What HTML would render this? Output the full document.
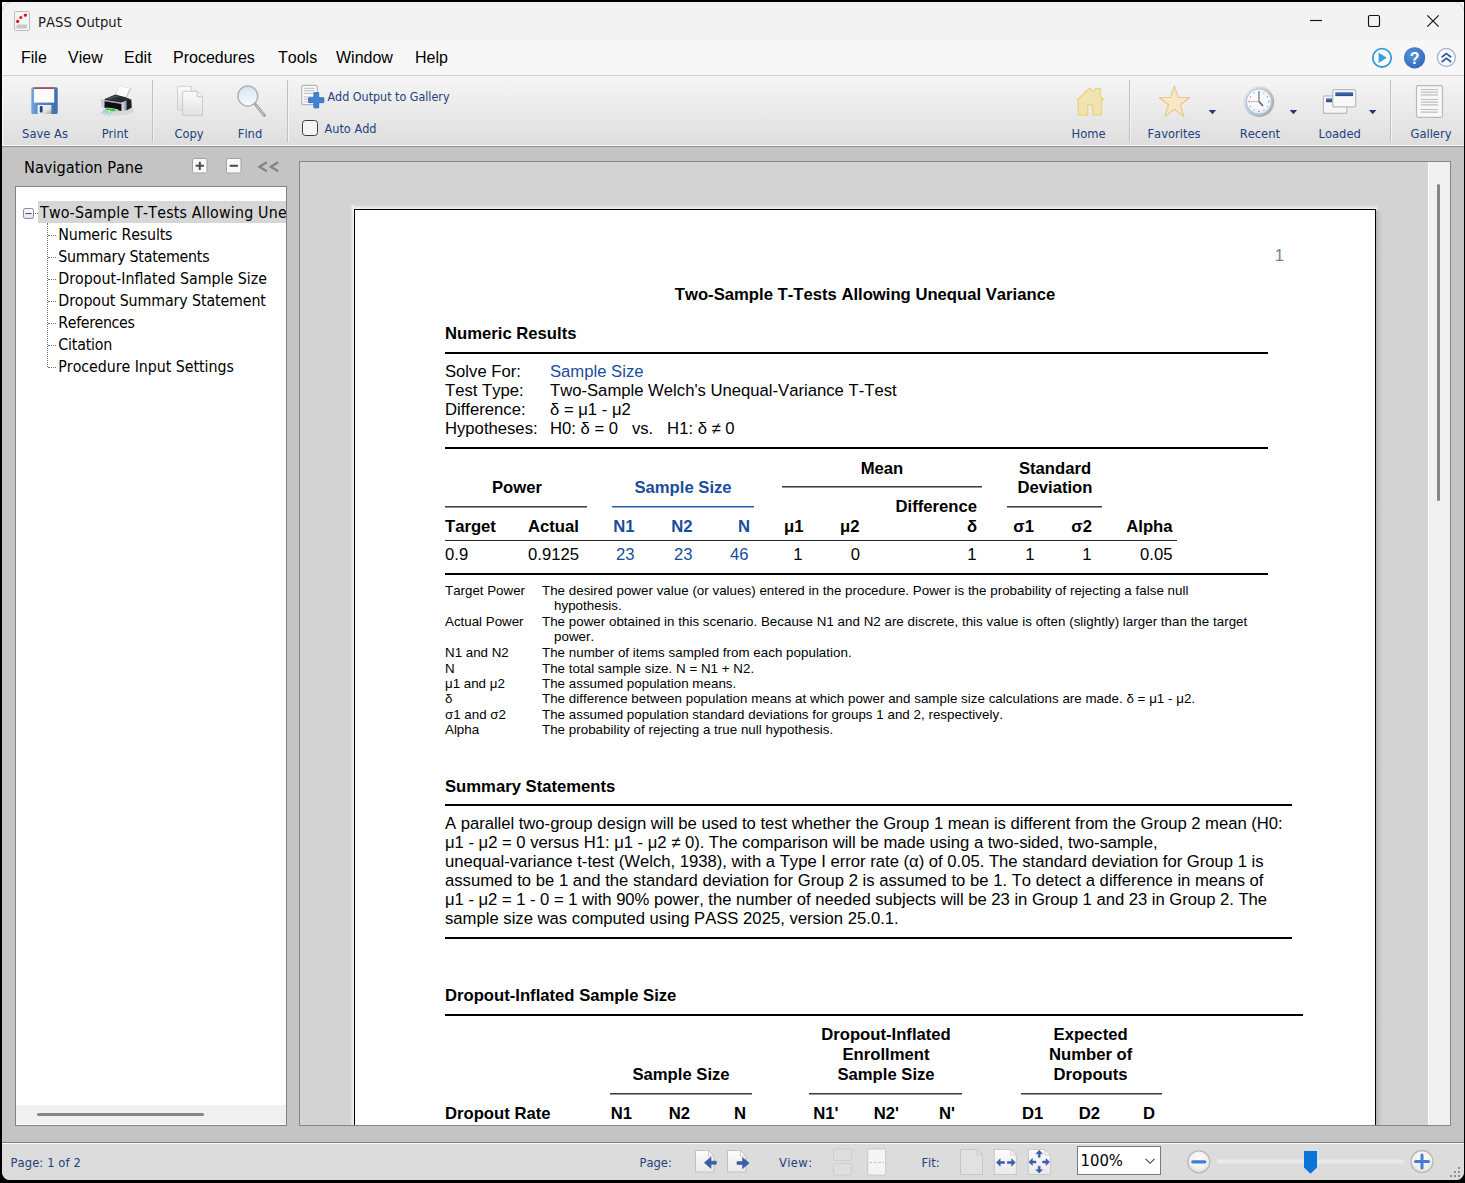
<!DOCTYPE html>
<html lang="en"><head><meta charset="utf-8"><title>PASS Output</title>
<style>
html,body{margin:0;padding:0;}
body{width:1465px;height:1183px;overflow:hidden;background:#000;position:relative;font-family:"Liberation Sans",Arial,sans-serif;color:#000;}
.a{position:absolute;}
.t{position:absolute;white-space:pre;font-kerning:none;}
#win{position:absolute;left:2px;top:2px;width:1462px;height:1178px;background:#c4c4c4;border-radius:0 0 8px 8px;overflow:hidden;}
svg{position:absolute;overflow:visible;}

</style></head>
<body>
<div id="win"></div>
<div class="a" style="left:2px;top:2px;width:1462px;height:38px;background:#f3f3f3;"></div>
<svg class="a" style="left:2px;top:2px" width="1462" height="12" viewBox="2 2 1462 12"><path d="M2 10V2H10A8 8 0 0 0 2 10Z" fill="#fdfdfd"/><path d="M2.500 10.500A8 8 0 0 1 10.500 2.500" fill="none" stroke="#d4d4d4" stroke-width="1"/><path d="M1464 10V2H1456A8 8 0 0 1 1464 10Z" fill="#fdfdfd"/><path d="M1463.500 10.500A8 8 0 0 0 1455.500 2.500" fill="none" stroke="#d4d4d4" stroke-width="1"/></svg>
<svg class="a" style="left:14px;top:11px" width="17" height="21" viewBox="0 0 17 21">
<rect x="0.5" y="0.5" width="15" height="19" rx="1" fill="#f4f4f4" stroke="#bdbdbd"/>
<rect x="2.5" y="13.5" width="10.5" height="4" fill="#c8c8c8"/>
<circle cx="3.7" cy="10.4" r="1.6" fill="#e8111a"/><circle cx="6.8" cy="6.6" r="1.5" fill="#e8111a"/><circle cx="11.4" cy="4.2" r="1.6" fill="#e8111a"/>
</svg>
<div class="t " style="top:12.00px;font-size:14.7px;line-height:19px;left:38px;color:#1b1b1b;font-family:'DejaVu Sans Condensed', 'DejaVu Sans', 'Liberation Sans', sans-serif;font-kerning:none;">PASS Output</div>
<svg class="a" style="left:1300px;top:2px" width="163" height="38" viewBox="1300 2 163 38" fill="none" stroke="#111" stroke-width="1.15">
<path d="M1310 20.5h12"/>
<rect x="1368.5" y="15.5" width="11" height="11" rx="1.6"/>
<path d="M1427.3 15.3l11.4 11.4M1438.7 15.3l-11.4 11.4"/>
</svg>
<div class="a" style="left:2px;top:40px;width:1462px;height:35px;background:#f7f7f7;"></div>
<div class="a" style="left:2px;top:75px;width:1462px;height:1px;background:#d2d2d2;"></div>
<div class="t " style="top:47.00px;font-size:16px;line-height:21px;left:21px;">File</div>
<div class="t " style="top:47.00px;font-size:16px;line-height:21px;left:68px;">View</div>
<div class="t " style="top:47.00px;font-size:16px;line-height:21px;left:124px;">Edit</div>
<div class="t " style="top:47.00px;font-size:16px;line-height:21px;left:173px;">Procedures</div>
<div class="t " style="top:47.00px;font-size:16px;line-height:21px;left:278px;">Tools</div>
<div class="t " style="top:47.00px;font-size:16px;line-height:21px;left:336px;">Window</div>
<div class="t " style="top:47.00px;font-size:16px;line-height:21px;left:415px;">Help</div>
<svg class="a" style="left:1365px;top:42px" width="98" height="32" viewBox="1365 42 98 32">
<circle cx="1382" cy="57.8" r="9.2" fill="#fdfdfd" stroke="#3a9ad8" stroke-width="1.8"/>
<path d="M1378.6 52.6l8.2 5.2l-8.2 5.2z" fill="#3aa0e2"/>
<defs><radialGradient id="hg" cx="0.4" cy="0.35" r="0.7"><stop offset="0" stop-color="#5b93dc"/><stop offset="1" stop-color="#2f68b8"/></radialGradient></defs>
<circle cx="1414.6" cy="57.8" r="10.6" fill="url(#hg)"/>
<text x="1414.7" y="63.6" font-family="Liberation Sans, sans-serif" font-size="16" font-weight="bold" fill="#fff" text-anchor="middle">?</text>
<circle cx="1446.4" cy="57.5" r="9" fill="#fdfdfd" stroke="#a3b7d6" stroke-width="1.400"/>
<path d="M1441.6 57.2l4.8-3.6l4.8 3.6M1441.6 62l4.8-3.6l4.8 3.6" fill="none" stroke="#2f5b9c" stroke-width="1.7"/>
</svg>
<div class="a" style="left:2px;top:76px;width:1462px;height:69px;background:linear-gradient(#f5f5f5,#eaeaea 50%,#dedede);"></div>
<div class="a" style="left:2px;top:145px;width:1462px;height:1px;background:#fafafa;"></div>
<div class="a" style="left:2px;top:76px;width:1px;height:69px;background:#fbfbfb;"></div>
<div class="a" style="left:2px;top:146px;width:1462px;height:1px;background:#8e8e8e;"></div>
<div class="a" style="left:152px;top:80px;width:1px;height:62px;background:#c0c0c0;"></div>
<div class="a" style="left:153px;top:80px;width:1px;height:62px;background:#f4f4f4;"></div>
<div class="a" style="left:287px;top:80px;width:1px;height:62px;background:#c0c0c0;"></div>
<div class="a" style="left:288px;top:80px;width:1px;height:62px;background:#f4f4f4;"></div>
<div class="a" style="left:1129px;top:80px;width:1px;height:62px;background:#c0c0c0;"></div>
<div class="a" style="left:1130px;top:80px;width:1px;height:62px;background:#f4f4f4;"></div>
<div class="a" style="left:1390px;top:80px;width:1px;height:62px;background:#c0c0c0;"></div>
<div class="a" style="left:1391px;top:80px;width:1px;height:62px;background:#f4f4f4;"></div>
<svg class="a" style="left:0;top:75px" width="1465" height="72" viewBox="0 75 1465 72">
<defs>
<linearGradient id="fl" x1="0" x2="1"><stop offset="0" stop-color="#7aa5d8"/><stop offset="0.25" stop-color="#5a8bc8"/><stop offset="1" stop-color="#3f6fb0"/></linearGradient>
<linearGradient id="sh" x1="0" x2="1" y1="0" y2="1"><stop offset="0" stop-color="#fafafa"/><stop offset="0.6" stop-color="#e6e6e6"/><stop offset="1" stop-color="#a8a8a8"/></linearGradient>
<linearGradient id="pg" x1="0" x2="0" y1="0" y2="1"><stop offset="0" stop-color="#fbfbfb"/><stop offset="1" stop-color="#e2e2e2"/></linearGradient>
<linearGradient id="gl" x1="0" x2="0" y1="0" y2="1"><stop offset="0" stop-color="#d3e6f3"/><stop offset="0.45" stop-color="#e6f0f7"/><stop offset="1" stop-color="#fafcfd"/></linearGradient>
<linearGradient id="hm" x1="0" x2="0" y1="0" y2="1"><stop offset="0" stop-color="#f2e5b6"/><stop offset="1" stop-color="#f1e2ae"/></linearGradient>
<linearGradient id="prs" x1="0" x2="1"><stop offset="0" stop-color="#e4e6ee"/><stop offset="0.5" stop-color="#b9bcc8"/><stop offset="1" stop-color="#8a8d99"/></linearGradient>
<linearGradient id="ph" x1="0" x2="1" y1="0" y2="1"><stop offset="0" stop-color="#4fd04a"/><stop offset="0.5" stop-color="#3fb848"/><stop offset="1" stop-color="#d8e070"/></linearGradient>
<radialGradient id="ck" cx="0.45" cy="0.4" r="0.6"><stop offset="0" stop-color="#ffffff"/><stop offset="0.8" stop-color="#f2f4f8"/><stop offset="1" stop-color="#dfe6f0"/></radialGradient>
<linearGradient id="ckr" x1="0" x2="1" y1="0" y2="1"><stop offset="0" stop-color="#f2f2f2"/><stop offset="0.5" stop-color="#c9c9c9"/><stop offset="1" stop-color="#9c9c9c"/></linearGradient>
<linearGradient id="wb" x1="0" x2="0" y1="0" y2="1"><stop offset="0" stop-color="#4d79b8"/><stop offset="1" stop-color="#1f4788"/></linearGradient>
</defs>
<!-- save -->
<rect x="31.3" y="87.3" width="26.4" height="26.6" rx="1.5" fill="url(#fl)"/>
<rect x="34" y="88" width="20.2" height="14.6" fill="#fbfbfb"/>
<rect x="34" y="87.4" width="20.2" height="1.6" fill="#a24f60"/>
<rect x="37.6" y="105" width="13.8" height="9" fill="url(#sh)"/>
<rect x="39.8" y="106" width="2.8" height="6.6" rx="0.8" fill="#1c4586"/>
<!-- print -->
<ellipse cx="118" cy="110.500" rx="16" ry="5" fill="#000" opacity="0.07"/>
<polygon points="118.500,86.200 131.300,88.100 126.800,97.600 115.900,95.200" fill="#fcfcfc" stroke="#dcdce0" stroke-width="0.700"/>
<polygon points="129.800,88.300 131.300,88.100 126.800,97.600 125.600,97.200" fill="#c9c9d0"/>
<polygon points="104.700,98.900 115.300,94.600 125.500,97.300 130.900,99.300 121.700,103 104.500,100.300" fill="#2a2b36"/>
<polygon points="106.500,98.700 115.200,95.400 119,96.400 109.500,99.600" fill="#5b5e70" opacity="0.650"/>
<polygon points="100.900,99.500 121.700,102.500 121.700,104 100.900,100.900" fill="#a3a6b3"/>
<polygon points="104.300,101.300 121.700,103.900 121.700,111 104.300,107.800" fill="#0e0e13"/>
<polygon points="100.800,99.400 104.300,100 104.300,107.800 101.400,107.100" fill="#c9ccd8"/>
<polygon points="121.700,102.600 126.500,100.500 126.500,110.300 121.700,111.600" fill="url(#prs)"/>
<polygon points="126.500,100.500 131.300,99.200 131.800,107.600 126.500,110.600" fill="#1d1e26"/>
<polygon points="106.600,107.400 118.200,109.300 111.100,115.400 99.500,112.800" fill="#f2f2f2"/>
<polygon points="107,108 117,109.700 114.800,111.600 104.600,109.700" fill="#2fc83a"/>
<polygon points="104.600,109.700 114.800,111.600 111,114.700 100.600,112.600" fill="#9fd0f4"/>
<circle cx="109.400" cy="111.900" r="1.300" fill="#e4e66a"/>
<polygon points="99.500,112.800 111.100,115.400 111,116.200 99.400,113.600" fill="#c8c8c8"/>
<!-- copy -->
<path d="M177.5 86.3h13.6l4.8 4.8v18.9h-18.4z" fill="url(#pg)" stroke="#cdcdcd" stroke-width="0.9"/>
<path d="M191.1 86.3v4.8h4.8" fill="#f2f2f2" stroke="#c4c4c4" stroke-width="0.8"/>
<path d="M182.6 91.4h14.6l5.3 5.3v18.9h-19.9z" fill="url(#pg)" stroke="#c6c6c6" stroke-width="0.9"/>
<path d="M197.2 91.4v5.3h5.3" fill="#f4f4f4" stroke="#bdbdbd" stroke-width="0.8"/>
<!-- find -->
<path d="M255.4 104.4l9 11" stroke="#9d9d9d" stroke-width="3" stroke-linecap="round"/>
<path d="M256 105l8 9.8" stroke="#d8d8d8" stroke-width="1" stroke-linecap="round"/>
<circle cx="247.8" cy="96" r="9.9" fill="url(#gl)" stroke="#b2b2b2" stroke-width="1.5"/>
<!-- add output -->
<rect x="301.700" y="85.400" width="15.600" height="19.200" rx="2" fill="#fbfbfb" stroke="#b6b6b6" stroke-width="1.200"/>
<path d="M303.800 88.400h10.900M303.800 90.600h10.900M303.800 93.400h10.900M303.800 96.900h10.900M303.800 99.400h10.900M303.800 102h10.900" stroke="#c6c6c6" stroke-width="1.100"/>
<path d="M313.900 92.700h4.800v5.100h5.100v4.800h-5.100v5.200h-4.800v-5.200h-5.200v-4.800h5.200z" fill="#3f83d8" stroke="#2f69b6" stroke-width="0.9" stroke-linejoin="round"/>
<!-- home -->
<path d="M1077.300 99.700L1089.600 87.900L1093.400 91.500L1095.300 90.200V88.600H1100.300V96.500L1103.300 99.300L1102.100 100.500H1101.400V114.900H1092.700V106.500Q1092.700 104.800 1091 104.800H1089.300Q1087.600 104.800 1087.600 106.500V114.900H1078.300V100.700Z" fill="url(#hm)" stroke="#ebd57e" stroke-width="1.400" stroke-linejoin="round"/>
<!-- star -->
<path d="M1174.40 85.80L1178.09 97.36L1189.67 97.48L1180.36 104.74L1183.84 116.37L1174.40 109.30L1164.96 116.37L1168.44 104.74L1159.13 97.48L1170.71 97.36Z" fill="#fbe6c4" stroke="#e6c790" stroke-width="1.100" stroke-linejoin="round"/>
<path d="M1208.700 110h7.400l-3.700 4.200z" fill="#1f3c70"/>
<!-- clock -->
<circle cx="1259" cy="101.600" r="15.300" fill="url(#ckr)"/>
<circle cx="1259" cy="101.600" r="12.600" fill="url(#ck)" stroke="#a9c4e6" stroke-width="1.200"/>
<g fill="#8a8f99"><circle cx="1259" cy="91.800" r="0.8"/><circle cx="1259" cy="111.400" r="0.8"/><circle cx="1249.200" cy="101.600" r="0.8"/><circle cx="1268.800" cy="101.600" r="0.8"/><circle cx="1263.900" cy="93.100" r="0.600"/><circle cx="1267.500" cy="96.700" r="0.600"/><circle cx="1267.500" cy="106.500" r="0.600"/><circle cx="1263.900" cy="110.100" r="0.600"/><circle cx="1254.100" cy="110.100" r="0.600"/><circle cx="1250.500" cy="106.500" r="0.600"/><circle cx="1250.500" cy="96.700" r="0.600"/><circle cx="1254.100" cy="93.100" r="0.600"/></g>
<path d="M1259 101.600v-9.800" stroke="#6a7380" stroke-width="1.200"/>
<path d="M1259 101.600l4 4.400" stroke="#4c5562" stroke-width="1.500"/>
<path d="M1259 101.600h-8.500" stroke="#eea592" stroke-width="1"/>
<path d="M1289.700 110h7.400l-3.700 4.200z" fill="#1f3c70"/>
<!-- loaded -->
<rect x="1323.400" y="95.800" width="23.400" height="17.600" rx="2" fill="#f5f5f5" stroke="#bcbcbc" stroke-width="1.200"/>
<rect x="1326" y="98.400" width="18" height="3.800" fill="url(#wb)"/>
<rect x="1332.700" y="89.700" width="23" height="17.200" rx="2" fill="#f8f8f8" stroke="#bcbcbc" stroke-width="1.200"/>
<rect x="1335.300" y="92.200" width="17.800" height="3.900" fill="url(#wb)"/>
<path d="M1369 110h7.400l-3.700 4.200z" fill="#1f3c70"/>
<!-- gallery -->
<rect x="1416.500" y="85.700" width="26" height="31.600" rx="1.500" fill="#f8f8f8" stroke="#b9b9b9" stroke-width="1.200"/>
<path d="M1420.700 89.500h17.300M1420.700 92.200h17.300M1420.700 94.900h17.300M1420.700 99.500h17.300M1420.700 102.200h17.300M1420.700 104.900h17.300M1420.700 109.500h17.300M1420.700 112.200h17.300" stroke="#bdbdbd" stroke-width="1.200"/>
</svg>
<div class="t " style="top:125.00px;font-size:12.8px;line-height:17px;left:-255px;width:600px;text-align:center;color:#22417e;font-family:'DejaVu Sans Condensed', 'DejaVu Sans', 'Liberation Sans', sans-serif;font-kerning:none;">Save As</div>
<div class="t " style="top:125.00px;font-size:12.8px;line-height:17px;left:-185px;width:600px;text-align:center;color:#22417e;font-family:'DejaVu Sans Condensed', 'DejaVu Sans', 'Liberation Sans', sans-serif;font-kerning:none;">Print</div>
<div class="t " style="top:125.00px;font-size:12.8px;line-height:17px;left:-111px;width:600px;text-align:center;color:#22417e;font-family:'DejaVu Sans Condensed', 'DejaVu Sans', 'Liberation Sans', sans-serif;font-kerning:none;">Copy</div>
<div class="t " style="top:125.00px;font-size:12.8px;line-height:17px;left:-50px;width:600px;text-align:center;color:#22417e;font-family:'DejaVu Sans Condensed', 'DejaVu Sans', 'Liberation Sans', sans-serif;font-kerning:none;">Find</div>
<div class="t " style="top:89.00px;font-size:12.4px;line-height:16px;left:327.5px;color:#22417e;font-family:'DejaVu Sans Condensed', 'DejaVu Sans', 'Liberation Sans', sans-serif;font-kerning:none;">Add Output to Gallery</div>
<div class="t " style="top:121.00px;font-size:12.6px;line-height:16px;left:324.5px;color:#22417e;font-family:'DejaVu Sans Condensed', 'DejaVu Sans', 'Liberation Sans', sans-serif;font-kerning:none;">Auto Add</div>
<div class="a" style="left:302px;top:120px;width:14px;height:14px;background:#f5f5f5;border:1px solid #3c3c3c;border-radius:3.5px;"></div>
<div class="t " style="top:125.00px;font-size:12.8px;line-height:17px;left:788.5px;width:600px;text-align:center;color:#22417e;font-family:'DejaVu Sans Condensed', 'DejaVu Sans', 'Liberation Sans', sans-serif;font-kerning:none;">Home</div>
<div class="t " style="top:125.00px;font-size:12.8px;line-height:17px;left:874px;width:600px;text-align:center;color:#22417e;font-family:'DejaVu Sans Condensed', 'DejaVu Sans', 'Liberation Sans', sans-serif;font-kerning:none;">Favorites</div>
<div class="t " style="top:125.00px;font-size:12.8px;line-height:17px;left:959.8px;width:600px;text-align:center;color:#22417e;font-family:'DejaVu Sans Condensed', 'DejaVu Sans', 'Liberation Sans', sans-serif;font-kerning:none;">Recent</div>
<div class="t " style="top:125.00px;font-size:12.8px;line-height:17px;left:1039.7px;width:600px;text-align:center;color:#22417e;font-family:'DejaVu Sans Condensed', 'DejaVu Sans', 'Liberation Sans', sans-serif;font-kerning:none;">Loaded</div>
<div class="t " style="top:125.00px;font-size:12.8px;line-height:17px;left:1131px;width:600px;text-align:center;color:#22417e;font-family:'DejaVu Sans Condensed', 'DejaVu Sans', 'Liberation Sans', sans-serif;font-kerning:none;">Gallery</div>
<div class="t " style="top:157.00px;font-size:16.2px;line-height:21px;left:24px;font-family:'DejaVu Sans Condensed', 'DejaVu Sans', 'Liberation Sans', sans-serif;font-kerning:none;">Navigation Pane</div>
<svg class="a" style="left:190px;top:155px" width="100" height="24" viewBox="190 155 100 24">
<rect x="192.500" y="158.500" width="14.500" height="14.500" rx="1.500" fill="#f8f8f8" stroke="#a2a2a2"/>
<path d="M195.700 165.800h8.200M199.800 161.700v8.200" stroke="#4a4a4a" stroke-width="2" fill="none"/>
<rect x="226.500" y="158.500" width="14.500" height="14.500" rx="1.500" fill="#f8f8f8" stroke="#a2a2a2"/>
<path d="M229.700 165.800h8.200" stroke="#4a4a4a" stroke-width="2" fill="none"/>
<path d="M266.800 162.200l-7.400 4.500l7.400 4.500M278.300 162.200l-7.400 4.500l7.400 4.500" stroke="#858585" stroke-width="2.300" fill="none"/>
</svg>
<div class="a" style="left:15px;top:186px;width:270px;height:938px;background:#fff;border:1px solid #828282;"></div>
<div class="a" style="left:38px;top:201px;width:248px;height:22px;background:#d6d6d6;"></div>
<div class="a" style="left:47px;top:223px;width:0;height:144px;border-left:1px dotted #707070;"></div>
<div class="a" style="left:35px;top:213px;width:3px;height:0;border-top:1px dotted #707070;"></div>
<svg class="a" style="left:23px;top:208px" width="13" height="13" viewBox="0 0 13 13"><defs><linearGradient id="eb" x1="0" x2="0" y1="0" y2="1"><stop offset="0" stop-color="#ffffff"/><stop offset="1" stop-color="#e4e4e4"/></linearGradient></defs><rect x="0.5" y="0.5" width="10" height="10" rx="1.800" fill="url(#eb)" stroke="#8c8c8c"/><path d="M2.400 5.500h6.200" stroke="#3d52b4" stroke-width="1.100"/></svg>
<div class="a" style="left:40px;top:201px;width:246px;height:22px;overflow:hidden;"><div class="t" style="left:0;top:1px;font-size:15.8px;line-height:22px;font-kerning:none;letter-spacing:0.2px;font-family:'DejaVu Sans Condensed', 'DejaVu Sans', 'Liberation Sans', sans-serif">Two-Sample T-Tests Allowing Unequal Variance</div></div>
<div class="a" style="left:48px;top:235px;width:8px;height:0;border-top:1px dotted #707070;"></div>
<div class="t " style="top:224.00px;font-size:15.8px;line-height:21px;left:58.3px;font-family:'DejaVu Sans Condensed', 'DejaVu Sans', 'Liberation Sans', sans-serif;font-kerning:none;letter-spacing:-0.15px;">Numeric Results</div>
<div class="a" style="left:48px;top:257px;width:8px;height:0;border-top:1px dotted #707070;"></div>
<div class="t " style="top:246.00px;font-size:15.8px;line-height:21px;left:58.3px;font-family:'DejaVu Sans Condensed', 'DejaVu Sans', 'Liberation Sans', sans-serif;font-kerning:none;letter-spacing:-0.24px;">Summary Statements</div>
<div class="a" style="left:48px;top:279px;width:8px;height:0;border-top:1px dotted #707070;"></div>
<div class="t " style="top:268.00px;font-size:15.8px;line-height:21px;left:58.3px;font-family:'DejaVu Sans Condensed', 'DejaVu Sans', 'Liberation Sans', sans-serif;font-kerning:none;">Dropout-Inflated Sample Size</div>
<div class="a" style="left:48px;top:301px;width:8px;height:0;border-top:1px dotted #707070;"></div>
<div class="t " style="top:290.00px;font-size:15.8px;line-height:21px;left:58.3px;font-family:'DejaVu Sans Condensed', 'DejaVu Sans', 'Liberation Sans', sans-serif;font-kerning:none;letter-spacing:-0.11px;">Dropout Summary Statement</div>
<div class="a" style="left:48px;top:323px;width:8px;height:0;border-top:1px dotted #707070;"></div>
<div class="t " style="top:312.00px;font-size:15.8px;line-height:21px;left:58.3px;font-family:'DejaVu Sans Condensed', 'DejaVu Sans', 'Liberation Sans', sans-serif;font-kerning:none;letter-spacing:-0.38px;">References</div>
<div class="a" style="left:48px;top:345px;width:8px;height:0;border-top:1px dotted #707070;"></div>
<div class="t " style="top:334.00px;font-size:15.8px;line-height:21px;left:58.3px;font-family:'DejaVu Sans Condensed', 'DejaVu Sans', 'Liberation Sans', sans-serif;font-kerning:none;letter-spacing:-0.2px;">Citation</div>
<div class="a" style="left:48px;top:367px;width:8px;height:0;border-top:1px dotted #707070;"></div>
<div class="t " style="top:356.00px;font-size:15.8px;line-height:21px;left:58.3px;font-family:'DejaVu Sans Condensed', 'DejaVu Sans', 'Liberation Sans', sans-serif;font-kerning:none;letter-spacing:-0.04px;">Procedure Input Settings</div>
<div class="a" style="left:16px;top:1105px;width:270px;height:19px;background:#f0f0f0;"></div>
<div class="a" style="left:37px;top:1113px;width:167px;height:3px;background:#868686;border-radius:2px;"></div>
<div class="a" style="left:299px;top:161px;width:1150px;height:963px;background:#d3d3d3;border:1px solid #868686;"></div>
<div class="a" style="left:1428px;top:162px;width:1px;height:963px;background:#fcfcfc;"></div>
<div class="a" style="left:1429px;top:162px;width:21px;height:963px;background:#f0f0f0;"></div>
<div class="a" style="left:1437px;top:184px;width:3px;height:317px;background:#868686;border-radius:2px;"></div>
<div class="a" style="left:350px;top:205px;width:1027px;height:4px;background:linear-gradient(#d3d3d3,#f6f6f6);"></div>
<div class="a" style="left:350px;top:205px;width:4px;height:920px;background:linear-gradient(90deg,#d3d3d3,#f6f6f6);"></div>
<div class="a" style="left:1376px;top:211px;width:7px;height:914px;background:linear-gradient(90deg,#b2b2b2,#c6c6c6 40%,#d3d3d3);"></div>
<div class="a" style="left:354px;top:209px;width:1020px;height:916px;background:#fff;border:1px solid #000;border-bottom:none;"></div>
<div class="t " style="top:245.00px;font-size:16.67px;line-height:22px;left:684px;width:600px;text-align:right;color:#808080;">1</div>
<div class="t " style="top:284.00px;font-size:16.67px;line-height:22px;left:565px;width:600px;text-align:center;font-weight:bold;">Two-Sample T-Tests Allowing Unequal Variance</div>
<div class="t " style="top:323.00px;font-size:16.67px;line-height:22px;left:445px;font-weight:bold;">Numeric Results</div>
<div class="a" style="left:445px;top:352px;width:823px;height:2px;background:#000;"></div>
<div class="t " style="top:361.00px;font-size:16.67px;line-height:22px;left:445px;">Solve For:</div>
<div class="t " style="top:361.00px;font-size:16.67px;line-height:22px;left:550px;color:#1a4d9c;">Sample Size</div>
<div class="t " style="top:380.00px;font-size:16.67px;line-height:22px;left:445px;">Test Type:</div>
<div class="t " style="top:380.00px;font-size:16.67px;line-height:22px;left:550px;">Two-Sample Welch&#x27;s Unequal-Variance T-Test</div>
<div class="t " style="top:399.00px;font-size:16.67px;line-height:22px;left:445px;">Difference:</div>
<div class="t " style="top:399.00px;font-size:16.67px;line-height:22px;left:550px;">δ = μ1 - μ2</div>
<div class="t " style="top:418.00px;font-size:16.67px;line-height:22px;left:445px;">Hypotheses:</div>
<div class="t " style="top:418.00px;font-size:16.67px;line-height:22px;left:550px;">H0: δ = 0   vs.   H1: δ ≠ 0</div>
<div class="a" style="left:445px;top:447px;width:823px;height:2px;background:#000;"></div>
<div class="t " style="top:477.00px;font-size:16.67px;line-height:22px;left:217px;width:600px;text-align:center;font-weight:bold;">Power</div>
<div class="a" style="left:445px;top:506px;width:142px;height:2px;background:linear-gradient(#3c3c3c 50%,#969696 50%);"></div>
<div class="t " style="top:477.00px;font-size:16.67px;line-height:22px;left:383px;width:600px;text-align:center;font-weight:bold;color:#1a4d9c;">Sample Size</div>
<div class="a" style="left:612px;top:506px;width:142px;height:2px;background:linear-gradient(#2d5caa 50%,#92acd4 50%);"></div>
<div class="t " style="top:458.00px;font-size:16.67px;line-height:22px;left:582px;width:600px;text-align:center;font-weight:bold;">Mean</div>
<div class="a" style="left:782px;top:486px;width:200px;height:2px;background:linear-gradient(#3c3c3c 50%,#969696 50%);"></div>
<div class="t " style="top:458.00px;font-size:16.67px;line-height:22px;left:755px;width:600px;text-align:center;font-weight:bold;">Standard</div>
<div class="t " style="top:477.00px;font-size:16.67px;line-height:22px;left:755px;width:600px;text-align:center;font-weight:bold;">Deviation</div>
<div class="a" style="left:1007px;top:506px;width:95px;height:2px;background:linear-gradient(#3c3c3c 50%,#969696 50%);"></div>
<div class="t " style="top:496.00px;font-size:16.67px;line-height:22px;left:377px;width:600px;text-align:right;font-weight:bold;">Difference</div>
<div class="t " style="top:516.00px;font-size:16.67px;line-height:22px;left:445px;font-weight:bold;">Target</div>
<div class="t " style="top:516.00px;font-size:16.67px;line-height:22px;left:528px;font-weight:bold;">Actual</div>
<div class="t " style="top:516.00px;font-size:16.67px;line-height:22px;left:34.5px;width:600px;text-align:right;font-weight:bold;color:#1a4d9c;">N1</div>
<div class="t " style="top:516.00px;font-size:16.67px;line-height:22px;left:92.5px;width:600px;text-align:right;font-weight:bold;color:#1a4d9c;">N2</div>
<div class="t " style="top:516.00px;font-size:16.67px;line-height:22px;left:150px;width:600px;text-align:right;font-weight:bold;color:#1a4d9c;">N</div>
<div class="t " style="top:516.00px;font-size:16.67px;line-height:22px;left:203.5px;width:600px;text-align:right;font-weight:bold;">μ1</div>
<div class="t " style="top:516.00px;font-size:16.67px;line-height:22px;left:259.5px;width:600px;text-align:right;font-weight:bold;">μ2</div>
<div class="t " style="top:516.00px;font-size:16.67px;line-height:22px;left:377px;width:600px;text-align:right;font-weight:bold;">δ</div>
<div class="t " style="top:516.00px;font-size:16.67px;line-height:22px;left:434px;width:600px;text-align:right;font-weight:bold;">σ1</div>
<div class="t " style="top:516.00px;font-size:16.67px;line-height:22px;left:492px;width:600px;text-align:right;font-weight:bold;">σ2</div>
<div class="t " style="top:516.00px;font-size:16.67px;line-height:22px;left:572.5px;width:600px;text-align:right;font-weight:bold;">Alpha</div>
<div class="a" style="left:445px;top:540px;width:732px;height:1px;background:#2a2a2a;"></div>
<div class="t " style="top:544.00px;font-size:16.67px;line-height:22px;left:445px;">0.9</div>
<div class="t " style="top:544.00px;font-size:16.67px;line-height:22px;left:528px;">0.9125</div>
<div class="t " style="top:544.00px;font-size:16.67px;line-height:22px;left:34.5px;width:600px;text-align:right;color:#1a4d9c;">23</div>
<div class="t " style="top:544.00px;font-size:16.67px;line-height:22px;left:92.5px;width:600px;text-align:right;color:#1a4d9c;">23</div>
<div class="t " style="top:544.00px;font-size:16.67px;line-height:22px;left:148.5px;width:600px;text-align:right;color:#1a4d9c;">46</div>
<div class="t " style="top:544.00px;font-size:16.67px;line-height:22px;left:202.5px;width:600px;text-align:right;">1</div>
<div class="t " style="top:544.00px;font-size:16.67px;line-height:22px;left:260px;width:600px;text-align:right;">0</div>
<div class="t " style="top:544.00px;font-size:16.67px;line-height:22px;left:376.5px;width:600px;text-align:right;">1</div>
<div class="t " style="top:544.00px;font-size:16.67px;line-height:22px;left:434.5px;width:600px;text-align:right;">1</div>
<div class="t " style="top:544.00px;font-size:16.67px;line-height:22px;left:491.5px;width:600px;text-align:right;">1</div>
<div class="t " style="top:544.00px;font-size:16.67px;line-height:22px;left:572.5px;width:600px;text-align:right;">0.05</div>
<div class="a" style="left:445px;top:573px;width:823px;height:2px;background:#000;"></div>
<div class="t " style="top:582.00px;font-size:13.33px;line-height:17px;left:445px;">Target Power</div>
<div class="t " style="top:582.00px;font-size:13.33px;line-height:17px;left:542px;letter-spacing:0.03px;">The desired power value (or values) entered in the procedure. Power is the probability of rejecting a false null</div>
<div class="t " style="top:597.00px;font-size:13.33px;line-height:17px;left:554px;letter-spacing:0.03px;">hypothesis.</div>
<div class="t " style="top:613.00px;font-size:13.33px;line-height:17px;left:445px;">Actual Power</div>
<div class="t " style="top:613.00px;font-size:13.33px;line-height:17px;left:542px;letter-spacing:0.03px;">The power obtained in this scenario. Because N1 and N2 are discrete, this value is often (slightly) larger than the target</div>
<div class="t " style="top:628.00px;font-size:13.33px;line-height:17px;left:554px;letter-spacing:0.03px;">power.</div>
<div class="t " style="top:644.00px;font-size:13.33px;line-height:17px;left:445px;">N1 and N2</div>
<div class="t " style="top:644.00px;font-size:13.33px;line-height:17px;left:542px;letter-spacing:0.03px;">The number of items sampled from each population.</div>
<div class="t " style="top:660.00px;font-size:13.33px;line-height:17px;left:445px;">N</div>
<div class="t " style="top:660.00px;font-size:13.33px;line-height:17px;left:542px;letter-spacing:0.03px;">The total sample size. N = N1 + N2.</div>
<div class="t " style="top:675.00px;font-size:13.33px;line-height:17px;left:445px;">μ1 and μ2</div>
<div class="t " style="top:675.00px;font-size:13.33px;line-height:17px;left:542px;letter-spacing:0.03px;">The assumed population means.</div>
<div class="t " style="top:690.00px;font-size:13.33px;line-height:17px;left:445px;">δ</div>
<div class="t " style="top:690.00px;font-size:13.33px;line-height:17px;left:542px;letter-spacing:0.03px;">The difference between population means at which power and sample size calculations are made. δ = μ1 - μ2.</div>
<div class="t " style="top:706.00px;font-size:13.33px;line-height:17px;left:445px;">σ1 and σ2</div>
<div class="t " style="top:706.00px;font-size:13.33px;line-height:17px;left:542px;letter-spacing:0.03px;">The assumed population standard deviations for groups 1 and 2, respectively.</div>
<div class="t " style="top:721.00px;font-size:13.33px;line-height:17px;left:445px;">Alpha</div>
<div class="t " style="top:721.00px;font-size:13.33px;line-height:17px;left:542px;letter-spacing:0.03px;">The probability of rejecting a true null hypothesis.</div>
<div class="t " style="top:776.00px;font-size:16.67px;line-height:22px;left:445px;font-weight:bold;">Summary Statements</div>
<div class="a" style="left:445px;top:804px;width:847px;height:2px;background:#000;"></div>
<div class="t " style="top:813.00px;font-size:16.67px;line-height:22px;left:445px;letter-spacing:-0.027px;">A parallel two-group design will be used to test whether the Group 1 mean is different from the Group 2 mean (H0:</div>
<div class="t " style="top:832.00px;font-size:16.67px;line-height:22px;left:445px;letter-spacing:-0.02px;">μ1 - μ2 = 0 versus H1: μ1 - μ2 ≠ 0). The comparison will be made using a two-sided, two-sample,</div>
<div class="t " style="top:851.00px;font-size:16.67px;line-height:22px;left:445px;letter-spacing:-0.01px;">unequal-variance t-test (Welch, 1938), with a Type I error rate (α) of 0.05. The standard deviation for Group 1 is</div>
<div class="t " style="top:870.00px;font-size:16.67px;line-height:22px;left:445px;">assumed to be 1 and the standard deviation for Group 2 is assumed to be 1. To detect a difference in means of</div>
<div class="t " style="top:889.00px;font-size:16.67px;line-height:22px;left:445px;letter-spacing:-0.033px;">μ1 - μ2 = 1 - 0 = 1 with 90% power, the number of needed subjects will be 23 in Group 1 and 23 in Group 2. The</div>
<div class="t " style="top:908.00px;font-size:16.67px;line-height:22px;left:445px;">sample size was computed using PASS 2025, version 25.0.1.</div>
<div class="a" style="left:445px;top:937px;width:847px;height:2px;background:#000;"></div>
<div class="t " style="top:985.00px;font-size:16.67px;line-height:22px;left:445px;font-weight:bold;">Dropout-Inflated Sample Size</div>
<div class="a" style="left:445px;top:1014px;width:858px;height:2px;background:#000;"></div>
<div class="t " style="top:1064.00px;font-size:16.67px;line-height:22px;left:381px;width:600px;text-align:center;font-weight:bold;">Sample Size</div>
<div class="a" style="left:610px;top:1093px;width:142px;height:2px;background:linear-gradient(#3c3c3c 50%,#969696 50%);"></div>
<div class="t " style="top:1024.00px;font-size:16.67px;line-height:22px;left:586px;width:600px;text-align:center;font-weight:bold;">Dropout-Inflated</div>
<div class="t " style="top:1044.00px;font-size:16.67px;line-height:22px;left:586px;width:600px;text-align:center;font-weight:bold;">Enrollment</div>
<div class="t " style="top:1064.00px;font-size:16.67px;line-height:22px;left:586px;width:600px;text-align:center;font-weight:bold;">Sample Size</div>
<div class="a" style="left:809px;top:1093px;width:153px;height:2px;background:linear-gradient(#3c3c3c 50%,#969696 50%);"></div>
<div class="t " style="top:1024.00px;font-size:16.67px;line-height:22px;left:790.5999999999999px;width:600px;text-align:center;font-weight:bold;">Expected</div>
<div class="t " style="top:1044.00px;font-size:16.67px;line-height:22px;left:790.5999999999999px;width:600px;text-align:center;font-weight:bold;">Number of</div>
<div class="t " style="top:1064.00px;font-size:16.67px;line-height:22px;left:790.5999999999999px;width:600px;text-align:center;font-weight:bold;">Dropouts</div>
<div class="a" style="left:1020.5px;top:1093px;width:141px;height:2px;background:linear-gradient(#3c3c3c 50%,#969696 50%);"></div>
<div class="t " style="top:1103.00px;font-size:16.67px;line-height:22px;left:445px;font-weight:bold;">Dropout Rate</div>
<div class="t " style="top:1103.00px;font-size:16.67px;line-height:22px;left:32px;width:600px;text-align:right;font-weight:bold;">N1</div>
<div class="t " style="top:1103.00px;font-size:16.67px;line-height:22px;left:90px;width:600px;text-align:right;font-weight:bold;">N2</div>
<div class="t " style="top:1103.00px;font-size:16.67px;line-height:22px;left:146px;width:600px;text-align:right;font-weight:bold;">N</div>
<div class="t " style="top:1103.00px;font-size:16.67px;line-height:22px;left:238.5px;width:600px;text-align:right;font-weight:bold;">N1&#x27;</div>
<div class="t " style="top:1103.00px;font-size:16.67px;line-height:22px;left:299px;width:600px;text-align:right;font-weight:bold;">N2&#x27;</div>
<div class="t " style="top:1103.00px;font-size:16.67px;line-height:22px;left:355px;width:600px;text-align:right;font-weight:bold;">N&#x27;</div>
<div class="t " style="top:1103.00px;font-size:16.67px;line-height:22px;left:443.29999999999995px;width:600px;text-align:right;font-weight:bold;">D1</div>
<div class="t " style="top:1103.00px;font-size:16.67px;line-height:22px;left:500px;width:600px;text-align:right;font-weight:bold;">D2</div>
<div class="t " style="top:1103.00px;font-size:16.67px;line-height:22px;left:555px;width:600px;text-align:right;font-weight:bold;">D</div>
<div class="a" style="left:2px;top:1125px;width:1462px;height:17px;background:#c4c4c4;"></div>
<div class="a" style="left:299px;top:1125px;width:1152px;height:1px;background:#868686;"></div>
<div class="a" style="left:15px;top:1125px;width:272px;height:1px;background:#828282;"></div>
<div class="a" style="left:2px;top:1142px;width:1462px;height:1px;background:#7e7e7e;"></div>
<div class="a" style="left:2px;top:1143px;width:1462px;height:1px;background:#fbfbfb;"></div>
<div class="a" style="left:2px;top:1144px;width:1462px;height:36px;background:#dcdcdc;border-radius:0 0 8px 8px;"></div>
<div class="t " style="top:1154.00px;font-size:12.8px;line-height:17px;left:10.5px;color:#22417e;font-family:'DejaVu Sans Condensed', 'DejaVu Sans', 'Liberation Sans', sans-serif;font-kerning:none;letter-spacing:0.12px;">Page: 1 of 2</div>
<div class="t " style="top:1154.00px;font-size:12.8px;line-height:17px;left:639.5px;color:#22417e;font-family:'DejaVu Sans Condensed', 'DejaVu Sans', 'Liberation Sans', sans-serif;font-kerning:none;">Page:</div>
<div class="t " style="top:1154.00px;font-size:12.8px;line-height:17px;left:779px;color:#22417e;font-family:'DejaVu Sans Condensed', 'DejaVu Sans', 'Liberation Sans', sans-serif;font-kerning:none;letter-spacing:0.4px;">View:</div>
<div class="t " style="top:1154.00px;font-size:12.8px;line-height:17px;left:921.5px;color:#22417e;font-family:'DejaVu Sans Condensed', 'DejaVu Sans', 'Liberation Sans', sans-serif;font-kerning:none;">Fit:</div>
<svg class="a" style="left:0;top:1144px" width="1465" height="36" viewBox="0 1144 1465 36">
<defs>
<linearGradient id="sp" x1="0" x2="0" y1="0" y2="1"><stop offset="0" stop-color="#fdfdfd"/><stop offset="1" stop-color="#e9e9e9"/></linearGradient>
<radialGradient id="zb" cx="0.5" cy="0.4" r="0.6"><stop offset="0" stop-color="#ffffff"/><stop offset="0.7" stop-color="#f1eeea"/><stop offset="1" stop-color="#e4e1dc"/></radialGradient>
</defs>
<!-- page prev/next -->
<path d="M695.500 1150.500h13l5.500 5.500v16h-18.500z" fill="url(#sp)" stroke="#c2c2c2" stroke-width="1"/>
<path d="M708.500 1150.500v5.500h5.500" fill="none" stroke="#c4c4c4" stroke-width="0.8"/>
<path d="M727.500 1150.500h13l5.500 5.500v16h-18.500z" fill="url(#sp)" stroke="#c2c2c2" stroke-width="1"/>
<path d="M740.500 1150.500v5.500h5.500" fill="none" stroke="#c4c4c4" stroke-width="0.8"/>
<g fill="#3b5da8" stroke="#3b5da8" stroke-width="0.6" stroke-linejoin="round"><polygon points="704.3,1162.7 711.0,1157.0 711.0,1161.2 716.3,1161.2 716.3,1164.2 711.0,1164.2 711.0,1168.4"/><polygon points="749.2,1163.1 742.5,1157.5 742.5,1161.6 737.0,1161.6 737.0,1164.5 742.5,1164.5 742.5,1168.7"/></g>
<!-- view -->
<rect x="833.500" y="1148.900" width="18" height="11.500" rx="1.800" fill="#dedede" stroke="#cdcdcd"/>
<rect x="833.500" y="1163.700" width="18" height="11.500" rx="1.800" fill="#dedede" stroke="#cdcdcd"/>
<rect x="867.700" y="1148.900" width="18" height="26.300" rx="1.800" fill="#f4f4f4" stroke="#c6c6c6"/>
<path d="M869.500 1162.500h14.500" stroke="#c0c0c0" stroke-width="1" stroke-dasharray="2.500 2"/>
<!-- fit -->
<path d="M960.500 1149.500h16.500l5.500 5.500v19.500h-22z" fill="#e1e1e1" stroke="#c6c6c6" stroke-width="1"/>
<path d="M977 1149.500v5.500h5.500" fill="none" stroke="#c8c8c8" stroke-width="0.800"/>
<path d="M994.300 1149.500h16.500l5.500 5.500v19.500h-22z" fill="url(#sp)" stroke="#c4c4c4" stroke-width="0.9"/>
<path d="M1010.800 1149.500v5.500h5.500" fill="none" stroke="#c4c4c4" stroke-width="0.800"/>
<g fill="#3b5da8" stroke="#3b5da8" stroke-width="0.5" stroke-linejoin="round"><polygon points="996.4,1162.5 1000.2,1158.7 1000.2,1161.5 1004.5,1161.5 1004.5,1163.5 1000.2,1163.5 1000.2,1166.3"/><polygon points="1015.2,1162.5 1011.6,1158.7 1011.6,1161.5 1007.3,1161.5 1007.3,1163.5 1011.6,1163.5 1011.6,1166.3"/></g>
<path d="M1028.400 1149.500h16.500l5.500 5.500v19.500h-22z" fill="url(#sp)" stroke="#c4c4c4" stroke-width="0.9"/>
<path d="M1044.900 1149.500v5.500h5.500" fill="none" stroke="#c4c4c4" stroke-width="0.800"/>
<g fill="#3b5da8" stroke="#3b5da8" stroke-width="0.5" stroke-linejoin="round"><polygon points="1039.2,1150.3 1035.8,1153.7 1038.2,1153.7 1038.2,1157.3 1040.2,1157.3 1040.2,1153.7 1042.6,1153.7"/><polygon points="1039.2,1173.0 1035.8,1169.8 1038.2,1169.8 1038.2,1166.2 1040.2,1166.2 1040.2,1169.8 1042.6,1169.8"/><polygon points="1028.8,1162.0 1032.4,1158.6 1032.4,1161.0 1036.0,1161.0 1036.0,1163.0 1032.4,1163.0 1032.4,1165.4"/><polygon points="1049.6,1162.0 1046.0,1158.6 1046.0,1161.0 1042.6,1161.0 1042.6,1163.0 1046.0,1163.0 1046.0,1165.4"/></g>
<!-- combo -->
<rect x="1077.500" y="1146.500" width="83" height="28" fill="#fff" stroke="#7a7a7a"/>
<path d="M1145.500 1158.800l4.500 4.500l4.500-4.500" fill="none" stroke="#444" stroke-width="1.100"/>
<!-- zoom slider -->
<rect x="1217" y="1159.500" width="187" height="4" fill="#e6eaea"/>
<circle cx="1198.800" cy="1161.800" r="11" fill="url(#zb)" stroke="#b9b9b9" stroke-width="1.300"/>
<path d="M1192.800 1161.800h12" stroke="#3f7fd8" stroke-width="3.200" stroke-linecap="round"/>
<circle cx="1422" cy="1161.500" r="11" fill="url(#zb)" stroke="#b9b9b9" stroke-width="1.300"/>
<path d="M1415.500 1161.500h13M1422 1155v13" stroke="#3f7fd8" stroke-width="3" stroke-linecap="round"/>
<path d="M1304 1151h13v16.500l-6.500 6.200l-6.500-6.200z" fill="#0a74d9"/>
<g fill="#8f8f8f"><rect x="1458" y="1167" width="2" height="2"/><rect x="1454" y="1171" width="2" height="2"/><rect x="1458" y="1171" width="2" height="2"/><rect x="1450" y="1175" width="2" height="2"/><rect x="1454" y="1175" width="2" height="2"/><rect x="1458" y="1175" width="2" height="2"/></g>
</svg>
<div class="t " style="top:1150.00px;font-size:16.5px;line-height:21px;left:1080.5px;font-family:'DejaVu Sans Condensed', 'DejaVu Sans', 'Liberation Sans', sans-serif;font-kerning:none;">100%</div>
</body></html>
